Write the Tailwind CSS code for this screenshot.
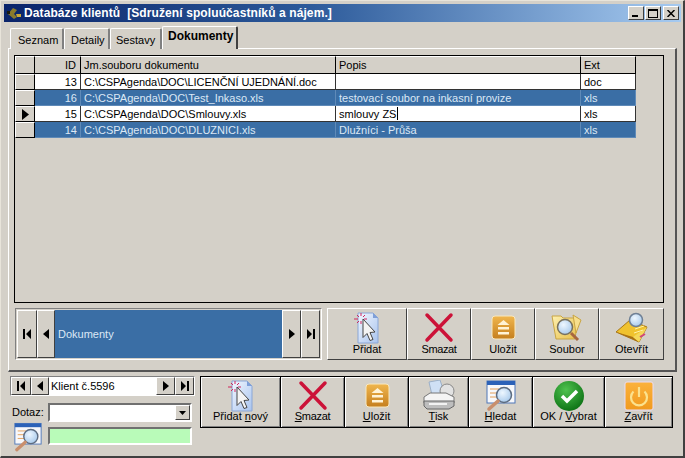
<!DOCTYPE html>
<html><head><meta charset="utf-8"><script src="https://cdn.jsdelivr.net/npm/@tailwindcss/browser@4"></script></head>
<body class="m-0 bg-[#d4d0c8]">
<svg class="absolute w-0 h-0" aria-hidden="true"><defs>
<linearGradient id="gp" x1="0" y1="0" x2="1" y2="1"><stop offset="0" stop-color="#f2f7ff"/><stop offset="1" stop-color="#a9c4ee"/></linearGradient>
<linearGradient id="go" x1="0" y1="0" x2="0" y2="1"><stop offset="0" stop-color="#f0b64e"/><stop offset="1" stop-color="#c57f1e"/></linearGradient>
<linearGradient id="gz" x1="0" y1="0" x2="0" y2="1"><stop offset="0" stop-color="#fbb23c"/><stop offset="1" stop-color="#f09a1e"/></linearGradient>
<radialGradient id="gg" cx=".4" cy=".3" r=".8"><stop offset="0" stop-color="#4fc24f"/><stop offset="1" stop-color="#066a0f"/></radialGradient>
<linearGradient id="gy" x1="0" y1="0" x2="1" y2="1"><stop offset="0" stop-color="#fdf0b0"/><stop offset="1" stop-color="#e8bf4a"/></linearGradient>
<radialGradient id="gl" cx=".4" cy=".35" r=".8"><stop offset="0" stop-color="#eef7ff"/><stop offset="1" stop-color="#9cc2e8"/></radialGradient>
<symbol id="add" viewBox="0 0 32 32"><path d="M7 1h15l5 5v25H7z" fill="url(#gp)" stroke="#8aa6d6"/><path d="M22 1v5h5z" fill="#7f9fd8"/><path d="M12 7l12 13-5 .5 3 7-3 1-3-7-4 4z" fill="#f4f4f4" stroke="#444" stroke-width="1"/><path d="M10 1v3M10 9v3M3 7h4M13 7h3M6 3l2 2M14 3l-2 2M6 11l2-2" stroke="#d0265c" stroke-width="1"/></symbol>
<symbol id="del" viewBox="0 0 32 32"><path d="M4 3L28 28M28 3L4 28" stroke="#cc1238" stroke-width="3.500" stroke-linecap="round"/></symbol>
<symbol id="save" viewBox="0 0 32 32"><rect x="5" y="4" width="23" height="23" rx="3" fill="url(#go)" stroke="#f8e8c0"/><path d="M16.500 8l6 5h-12z" fill="#fff3d6"/><path d="M11 15h11v2.500H11zM11 20h11v2.500H11z" fill="#fff3d6"/></symbol>
<symbol id="folder" viewBox="0 0 32 32"><path d="M1 4h9l2 2h15l-3 21H5z" fill="url(#gy)" stroke="#c9a544"/><path d="M22 3l8 5-5 13z" fill="#f7df8d" stroke="#c9a544"/><circle cx="14" cy="15" r="7.500" fill="url(#gl)" stroke="#77705e" stroke-width="1.500"/><path d="M20 21l7 7" stroke="#a7673f" stroke-width="3"/></symbol>
<symbol id="open" viewBox="0 0 32 32"><path d="M0 20L14 8l17 7-8 15z" fill="#f0c22e" stroke="#a8781a"/><path d="M0 20l17 5 6 5z" fill="#a86f14"/><path d="M17 25l14-10-8 15z" fill="#f5d85a"/><path d="M19 17l9-3M18 21l9-3" stroke="#fff2a8"/><path d="M24 25l5-3" stroke="#d0457a" stroke-width="2"/><circle cx="20" cy="8" r="6.500" fill="url(#gl)" stroke="#6f8095" stroke-width="1.500"/></symbol>
<symbol id="print" viewBox="0 0 34 32"><path d="M7 2l11-2 5 15H10z" fill="#cfe0f5" stroke="#9cb0c8"/><circle cx="25" cy="11" r="7" fill="#e2e2e2" stroke="#888"/><path d="M2 17l6-4h16l8 4v6H2z" fill="#f4f4f4" stroke="#777"/><path d="M2 21h30v5l-5 3H5l-3-3z" fill="#bdbdbd" stroke="#666"/><path d="M7 23h18v2H7z" fill="#f2f2f2"/></symbol>
<symbol id="find" viewBox="0 0 32 32"><rect x="2" y="1" width="28" height="22" fill="#f7f8fb" stroke="#4f77b8"/><rect x="2" y="1" width="28" height="4" fill="#2c62b8"/><path d="M5 9h9M5 13h7M5 17h7" stroke="#e3a05a"/><circle cx="19" cy="15" r="7.500" fill="url(#gl)" stroke="#5d6c80" stroke-width="1.500"/><path d="M13 21l-9 8" stroke="#c98f6d" stroke-width="3.500" stroke-linecap="round"/></symbol>
<symbol id="ok" viewBox="0 0 32 32"><circle cx="16" cy="16" r="15" fill="url(#gg)"/><path d="M9 16l5 5 10-10" fill="none" stroke="#fff" stroke-width="3.500"/></symbol>
<symbol id="off" viewBox="0 0 32 32"><rect x="2" y="2" width="28" height="28" rx="2" fill="url(#gz)" stroke="#eadcf4"/><path d="M10.500 11.500a8 8 0 1 0 11 0" fill="none" stroke="#fbe28e" stroke-width="2.200"/><path d="M16 7v10" stroke="#fbe28e" stroke-width="2.200"/></symbol>
<symbol id="first" viewBox="0 0 10 12"><path d="M1 1h2v10H1zM9 1v10L4 6z" fill="#000"/></symbol>
<symbol id="prev" viewBox="0 0 10 12"><path d="M8 1v10L2 6z" fill="#000"/></symbol>
<symbol id="next" viewBox="0 0 10 12"><path d="M2 1v10l6-5z" fill="#000"/></symbol>
<symbol id="last" viewBox="0 0 10 12"><path d="M7 1h2v10H7zM1 1v10l5-5z" fill="#000"/></symbol>
</defs></svg>

<div class="w-[685px] h-[458px] overflow-hidden bg-[#d4d0c8] text-black text-[11px] leading-[13px] font-['Liberation_Sans',sans-serif] border-r-2 border-b-2 border-[#404040] border-t border-l border-t-[#e8e4da] border-l-[#e8e4da] pt-[3px] pl-[3px] pr-[2px]">
  <!-- title bar -->
  <div class="h-[18px] w-[677px] flex items-center bg-[linear-gradient(90deg,#0a246a_0%,#2c5a9a_45%,#a6caf0_100%)] text-white pl-[2px]">
    <svg class="w-[16px] h-[14px] mr-[2px]" viewBox="0 0 16 14"><path d="M2 8l5-6 4 2-3 4 3 3-3 2z" fill="#8a7a2c"/><path d="M10 8h5v3h-4z" fill="#caa83a"/><path d="M1 5h3v3H1z" fill="#1a1a10"/></svg>
    <span class="font-bold text-[12px] tracking-[0.1px] whitespace-pre">Databáze klientů  [Sdružení spoluúčastníků a nájem.]</span>
    <div class="ml-auto mr-[2px] flex">
      <div class="w-[16px] h-[14px] bg-[#d4d0c8] border border-t-white border-l-white border-r-[#404040] border-b-[#404040] flex items-end justify-center pb-[2px] pr-[3px]"><div class="w-[6px] h-[2px] bg-black"></div></div>
      <div class="ml-[1px] w-[16px] h-[14px] bg-[#d4d0c8] border border-t-white border-l-white border-r-[#404040] border-b-[#404040] flex items-center justify-center"><div class="w-[10px] h-[9px] border border-black border-t-2"></div></div>
      <div class="ml-[2px] w-[16px] h-[14px] bg-[#d4d0c8] border border-t-white border-l-white border-r-[#404040] border-b-[#404040] flex items-center justify-center"><svg class="w-[8px] h-[7px]" viewBox="0 0 8 7"><path d="M0.500 0L7.500 7M7.500 0L0.500 7" stroke="#000" stroke-width="1.500"/></svg></div>
    </div>
  </div>

  <!-- tabs -->
  <div class="flex h-[24px] pl-[6px] items-end mt-[3px] relative z-10 -mb-[1px]">
    <div class="w-[54px] h-[21px] bg-[#d4d0c8] border-t border-l border-white border-r-2 border-r-[#808080] rounded-t-[2px] pl-[7px] pt-[5px]">Seznam</div>
    <div class="w-[46px] h-[21px] bg-[#d4d0c8] border-t border-l border-white border-r-2 border-r-[#808080] rounded-t-[2px] pl-[6px] pt-[5px]">Detaily</div>
    <div class="w-[52px] h-[21px] bg-[#d4d0c8] border-t border-l border-white border-r-2 border-r-[#808080] rounded-t-[2px] pl-[5px] pt-[5px]">Sestavy</div>
    <div class="w-[76px] h-[23px] bg-[#d4d0c8] border-t border-l border-white border-r-2 border-r-[#404040] rounded-t-[2px] pl-[5px] pt-[3px] font-bold text-[12px]">Dokumenty</div>
  </div>

  <!-- tab panel -->
  <div class="ml-[4px] w-[669px] h-[324px] border-t border-l border-white border-r-2 border-r-[#555] border-b-2 border-b-[#555] pt-[6px] pl-[5px]">
    <!-- grid -->
    <div class="w-[650px] h-[248px] border border-black">
      <div class="grid grid-cols-[20px_46px_255px_245px_55px] w-[621px] grid-rows-[18px_16px_16px_16px_16px]">
        <div class="border-r border-b border-black border-t-white border-t border-l border-l-white bg-[#d4d0c8]"></div>
        <div class="border-r border-b border-black border-t border-t-white bg-[#d4d0c8] text-right pr-[4px] pt-[2px]">ID</div>
        <div class="border-r border-b border-black border-t border-t-white bg-[#d4d0c8] pl-[3px] pt-[2px]">Jm.souboru dokumentu</div>
        <div class="border-r border-b border-black border-t border-t-white bg-[#d4d0c8] pl-[3px] pt-[2px]">Popis</div>
        <div class="border-r border-b border-black border-t border-t-white bg-[#d4d0c8] pl-[3px] pt-[2px]">Ext</div>

        <div class="border-r border-b border-black border-t border-t-white border-l border-l-white bg-[#d4d0c8]"></div>
        <div class="bg-white border-r border-b border-[#333] text-right pr-[3px] pt-[2px]">13</div>
        <div class="bg-white border-r border-b border-[#333] pl-[3px] pt-[2px] whitespace-nowrap tracking-[-0.05px]">C:\CSPAgenda\DOC\LICENČNÍ UJEDNÁNÍ.doc</div>
        <div class="bg-white border-r border-b border-[#333] pl-[3px] pt-[2px]"></div>
        <div class="bg-white border-r border-b border-[#333] pl-[3px] pt-[2px]">doc</div>

        <div class="border-r border-b border-black border-t border-t-white border-l border-l-white bg-[#d4d0c8]"></div>
        <div class="bg-[#3a6ea5] text-[#dce8f5] border-r border-b border-[#5f8ab8] text-right pr-[3px] pt-[2px]">16</div>
        <div class="bg-[#3a6ea5] text-[#dce8f5] border-r border-b border-[#5f8ab8] pl-[3px] pt-[2px] whitespace-nowrap">C:\CSPAgenda\DOC\Test_Inkaso.xls</div>
        <div class="bg-[#3a6ea5] text-[#dce8f5] border-r border-b border-[#5f8ab8] pl-[3px] pt-[2px] whitespace-nowrap">testovací soubor na inkasní provize</div>
        <div class="bg-[#3a6ea5] text-[#dce8f5] border-r border-b border-[#5f8ab8] pl-[3px] pt-[2px]">xls</div>

        <div class="border-r border-b border-black border-t border-t-white border-l border-l-white bg-[#d4d0c8] flex items-center justify-center"><svg class="w-[8px] h-[11px]" viewBox="0 0 8 11"><path d="M1 0v11l7-5.500z" fill="#000"/></svg></div>
        <div class="bg-white border-r border-b border-[#333] text-right pr-[3px] pt-[2px]">15</div>
        <div class="bg-white border-r border-b border-[#333] pl-[3px] pt-[2px] whitespace-nowrap">C:\CSPAgenda\DOC\Smlouvy.xls</div>
        <div class="bg-white border-r border-b border-[#333] pl-[3px] pt-[1px] flex items-start whitespace-nowrap"><span class="pt-[1px]">smlouvy ZS</span><span class="w-[1px] h-[13px] bg-black ml-[1px]"></span></div>
        <div class="bg-white border-r border-b border-[#333] pl-[3px] pt-[2px]">xls</div>

        <div class="border-r border-b border-black border-t border-t-white border-l border-l-white bg-[#d4d0c8]"></div>
        <div class="bg-[#3a6ea5] text-[#dce8f5] border-r border-b border-[#5f8ab8] text-right pr-[3px] pt-[2px]">14</div>
        <div class="bg-[#3a6ea5] text-[#dce8f5] border-r border-b border-[#5f8ab8] pl-[3px] pt-[2px] whitespace-nowrap">C:\CSPAgenda\DOC\DLUZNICI.xls</div>
        <div class="bg-[#3a6ea5] text-[#dce8f5] border-r border-b border-[#5f8ab8] pl-[3px] pt-[2px] whitespace-nowrap">Dlužníci - Průša</div>
        <div class="bg-[#3a6ea5] text-[#dce8f5] border-r border-b border-[#5f8ab8] pl-[3px] pt-[2px]">xls</div>
      </div>
    </div>

    <!-- lower strip in panel -->
    <div class="flex mt-[5px] ml-[1px]">
      <div class="w-[307px] h-[52px] flex border border-white border-t-[#808080] border-l-[#808080] p-[1px]">
        <div class="w-[20px] bg-[#d4d0c8] border border-t-white border-l-white border-r-[#404040] border-b-[#404040] flex items-center justify-center"><svg class="w-[10px] h-[12px]"><use href="#first"/></svg></div>
        <div class="w-[18px] bg-[#d4d0c8] border border-t-white border-l-white border-r-[#404040] border-b-[#404040] flex items-center justify-center"><svg class="w-[10px] h-[12px]"><use href="#prev"/></svg></div>
        <div class="flex-1 bg-[#3a6ea5] text-[#dce8f5] flex items-center pl-[3px]">Dokumenty</div>
        <div class="w-[19px] bg-[#d4d0c8] border border-t-white border-l-white border-r-[#404040] border-b-[#404040] flex items-center justify-center"><svg class="w-[10px] h-[12px]"><use href="#next"/></svg></div>
        <div class="w-[19px] bg-[#d4d0c8] border border-t-white border-l-white border-r-[#404040] border-b-[#404040] flex items-center justify-center"><svg class="w-[10px] h-[12px]"><use href="#last"/></svg></div>
      </div>
      <div class="ml-[5px] flex h-[52px]">
        <div class="w-[80px] border border-t-white border-l-white border-r-[#404040] border-b-[#404040] flex flex-col items-center pt-[3px]"><svg class="w-[32px] h-[32px]"><use href="#add"/></svg><span class="-mt-[1px]">Přidat</span></div>
        <div class="w-[64px] border border-t-white border-l-white border-r-[#404040] border-b-[#404040] flex flex-col items-center pt-[3px]"><svg class="w-[32px] h-[32px]"><use href="#del"/></svg><span class="-mt-[1px] tracking-[-0.4px]">Smazat</span></div>
        <div class="w-[64px] border border-t-white border-l-white border-r-[#404040] border-b-[#404040] flex flex-col items-center pt-[3px]"><svg class="w-[32px] h-[32px]"><use href="#save"/></svg><span class="-mt-[1px]">Uložit</span></div>
        <div class="w-[64px] border border-t-white border-l-white border-r-[#404040] border-b-[#404040] flex flex-col items-center pt-[3px]"><svg class="w-[32px] h-[32px]"><use href="#folder"/></svg><span class="-mt-[1px]">Soubor</span></div>
        <div class="w-[65px] border border-t-white border-l-white border-r-[#404040] border-b-[#404040] flex flex-col items-center pt-[3px]"><svg class="w-[32px] h-[32px]"><use href="#open"/></svg><span class="-mt-[1px]">Otevřít</span></div>
      </div>
    </div>
  </div>

  <!-- bottom area -->
  <div class="flex mt-[4px] ml-[6px]">
    <div class="w-[190px]">
      <div class="h-[20px] w-[185px] flex border border-t-[#808080] border-l-[#808080] border-b-white border-r-white">
        <div class="w-[20px] border border-t-white border-l-white border-r-[#404040] border-b-[#404040] flex items-center justify-center"><svg class="w-[10px] h-[12px]"><use href="#first"/></svg></div>
        <div class="w-[18px] border border-t-white border-l-white border-r-[#404040] border-b-[#404040] flex items-center justify-center"><svg class="w-[10px] h-[12px]"><use href="#prev"/></svg></div>
        <div class="flex-1 bg-white flex items-center pl-[2px]">Klient č.5596</div>
        <div class="w-[19px] border border-t-white border-l-white border-r-[#404040] border-b-[#404040] flex items-center justify-center"><svg class="w-[10px] h-[12px]"><use href="#next"/></svg></div>
        <div class="w-[19px] border border-t-white border-l-white border-r-[#404040] border-b-[#404040] flex items-center justify-center"><svg class="w-[10px] h-[12px]"><use href="#last"/></svg></div>
      </div>
      <div class="flex mt-[7px] items-center">
        <span class="w-[38px] pl-[2px]">Dotaz:</span>
        <div class="w-[144px] h-[19px] bg-white border-2 border-t-[#707070] border-l-[#707070] border-r-white border-b-white flex justify-end items-stretch">
          <div class="w-[15px] bg-[#d4d0c8] border border-t-white border-l-white border-r-[#404040] border-b-[#404040] flex items-center justify-center"><svg class="w-[7px] h-[4px]" viewBox="0 0 7 4"><path d="M0 0h7L3.500 4z" fill="#000"/></svg></div>
        </div>
      </div>
      <div class="flex">
        <svg class="w-[30px] h-[31px] ml-[3px]"><use href="#find"/></svg>
        <div class="ml-[5px] mt-[5px] w-[144px] h-[18px] bg-[#b9fbb9] border-2 border-t-[#707070] border-l-[#707070] border-r-white border-b-white"></div>
      </div>
    </div>
    <div class="flex h-[52px]">
      <div class="w-[81px] border border-black shadow-[inset_1px_1px_0_#fff,inset_-1px_-1px_0_#808080] flex flex-col items-center pt-[3px]"><svg class="w-[32px] h-[32px]"><use href="#add"/></svg><span class="-mt-[2px]">Přidat <u>n</u>ový</span></div>
      <div class="w-[64px] border border-black border-l-0 shadow-[inset_1px_1px_0_#fff,inset_-1px_-1px_0_#808080] flex flex-col items-center pt-[3px]"><svg class="w-[32px] h-[32px]"><use href="#del"/></svg><span class="-mt-[2px] tracking-[-0.3px]"><u>S</u>mazat</span></div>
      <div class="w-[64px] border border-black border-l-0 shadow-[inset_1px_1px_0_#fff,inset_-1px_-1px_0_#808080] flex flex-col items-center pt-[3px]"><svg class="w-[32px] h-[32px]"><use href="#save"/></svg><span class="-mt-[2px]"><u>U</u>ložit</span></div>
      <div class="w-[60px] border border-black border-l-0 shadow-[inset_1px_1px_0_#fff,inset_-1px_-1px_0_#808080] flex flex-col items-center pt-[3px]"><svg class="w-[34px] h-[32px]"><use href="#print"/></svg><span class="-mt-[2px]"><u>T</u>isk</span></div>
      <div class="w-[64px] border border-black border-l-0 shadow-[inset_1px_1px_0_#fff,inset_-1px_-1px_0_#808080] flex flex-col items-center pt-[3px]"><svg class="w-[32px] h-[32px]"><use href="#find"/></svg><span class="-mt-[2px]"><u>H</u>ledat</span></div>
      <div class="w-[72px] border border-black border-l-0 shadow-[inset_1px_1px_0_#fff,inset_-1px_-1px_0_#808080] flex flex-col items-center pt-[3px]"><svg class="w-[32px] h-[32px]"><use href="#ok"/></svg><span class="-mt-[2px]">OK / <u>V</u>ybrat</span></div>
      <div class="w-[68px] border border-black border-l-0 shadow-[inset_1px_1px_0_#fff,inset_-1px_-1px_0_#808080] flex flex-col items-center pt-[3px]"><svg class="w-[32px] h-[32px]"><use href="#off"/></svg><span class="-mt-[2px]"><u>Z</u>avřít</span></div>
    </div>
  </div>
</div>
</body></html>
